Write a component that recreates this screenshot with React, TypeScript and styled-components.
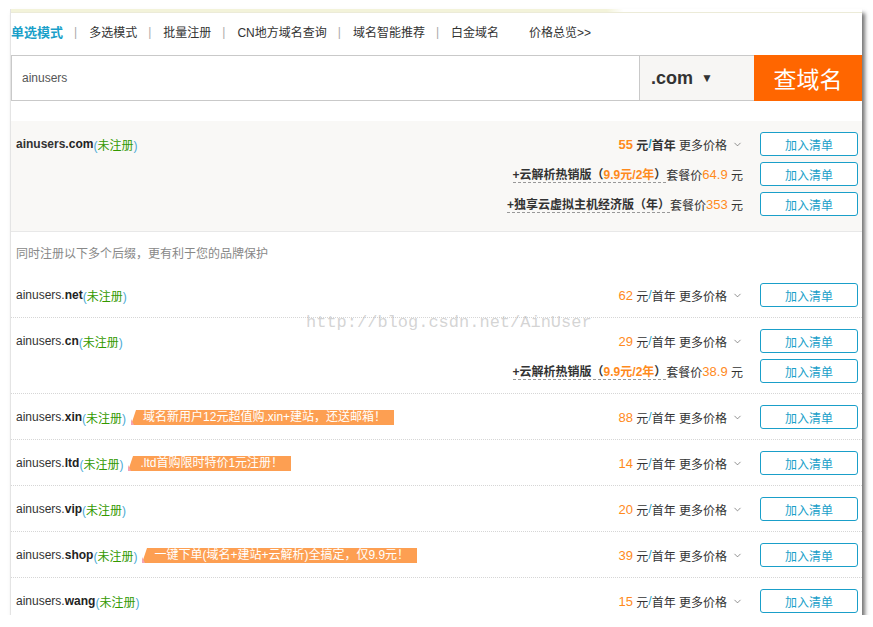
import styled, { createGlobalStyle } from "styled-components";
import { ChevronDown } from "lucide-react";

const GlobalStyle = createGlobalStyle`
  html, body {
    margin: 0;
    padding: 0;
    background: #fff;
  }
  body {
    font-family: "Liberation Sans", "Noto Sans CJK SC", sans-serif;
    color: #333;
  }
`;

type Extra = { label: string; hot?: string; close?: string; pkg: string };

type Domain = {
  suffix: string;
  price: string;
  tag?: string;
  extras?: Extra[];
};

const featured: Domain = {
  suffix: "com",
  price: "55",
  extras: [
    { label: "+云解析热销版（", hot: "9.9元/2年", close: "）", pkg: "64.9" },
    { label: "+独享云虚拟主机经济版（年）", pkg: "353" },
  ],
};

const domains: Domain[] = [
  { suffix: "net", price: "62" },
  {
    suffix: "cn",
    price: "29",
    extras: [{ label: "+云解析热销版（", hot: "9.9元/2年", close: "）", pkg: "38.9" }],
  },
  { suffix: "xin", price: "88", tag: "域名新用户12元超值购.xin+建站，还送邮箱！" },
  { suffix: "ltd", price: "14", tag: ".ltd首购限时特价1元注册！" },
  { suffix: "vip", price: "20" },
  { suffix: "shop", price: "39", tag: "一键下单(域名+建站+云解析)全搞定，仅9.9元！" },
  { suffix: "wang", price: "15" },
];

const navItems = ["单选模式", "多选模式", "批量注册", "CN地方域名查询", "域名智能推荐", "白金域名"];

const DomainRow = ({ d, featured }: { d: Domain; featured?: boolean }) => (
  <Row $featured={featured}>
    <NameCell>
      <Name $bold={featured}>
        ainusers.<b>{d.suffix}</b>
      </Name>
      <Status>
        <Paren>(</Paren>未注册<Paren>)</Paren>
      </Status>
      {d.tag && <Tag>{d.tag}</Tag>}
    </NameCell>
    <Offers>
      <OfferLine>
        <PriceText $bold={featured}>
          <Num>{d.price}</Num> 元<Slash>/</Slash>首年 <More>更多价格</More>
          <ChevronDown size={11} strokeWidth={1.4} color="#555" />
        </PriceText>
        <AddButton>加入清单</AddButton>
      </OfferLine>
      {d.extras?.map((e) => (
        <OfferLine key={e.label}>
          <PriceText>
            <Bundle>
              {e.label}
              {e.hot && <Hot>{e.hot}</Hot>}
              {e.close}
            </Bundle>{" "}
            套餐价<Pkg>{e.pkg}</Pkg> 元
          </PriceText>
          <AddButton>加入清单</AddButton>
        </OfferLine>
      ))}
    </Offers>
  </Row>
);

const App = () => {
  return (
    <>
      <GlobalStyle />
      <Frame>
        <TopStrip />
        <NavBar>
          {navItems.map((n, i) => (
            <NavItem key={n} $active={i === 0}>
              {i > 0 && <Sep>|</Sep>}
              {n}
            </NavItem>
          ))}
          <Overview>价格总览&gt;&gt;</Overview>
        </NavBar>
        <SearchBar>
          <SearchInput>ainusers</SearchInput>
          <SuffixSelect>
            .com <Caret>▼</Caret>
          </SuffixSelect>
          <SearchBtn>查域名</SearchBtn>
        </SearchBar>
        <FeaturedBlock>
          <DomainRow d={featured} featured />
        </FeaturedBlock>
        <Hint>同时注册以下多个后缀，更有利于您的品牌保护</Hint>
        <List>
          {domains.map((d) => (
            <DomainRow key={d.suffix} d={d} />
          ))}
        </List>
        <Watermark>http://blog.csdn.net/AinUser</Watermark>
      </Frame>
    </>
  );
};

const Frame = styled.div`
  position: relative;
  margin: 9px 0 0 10px;
  width: 852px;
  height: 606px;
  overflow: hidden;
  background: #fff;
  border-left: 1px solid #e4e4e4;
  box-sizing: border-box;
  box-shadow: 3px 4px 4px rgba(0, 0, 0, 0.55);
`;

const TopStrip = styled.div`
  height: 3px;
  background: linear-gradient(90deg, #f3f3da 0%, #f3f3da 70%, #fff 72%, #fff 100%);
  border-bottom: 1px solid #ecebd8;
`;

const NavBar = styled.div`
  display: flex;
  align-items: center;
  height: 37px;
  font-size: 12px;
`;

const NavItem = styled.span<{ $active?: boolean }>`
  display: flex;
  align-items: center;
  color: ${(p) => (p.$active ? "#1a9fc9" : "#333")};
  font-weight: ${(p) => (p.$active ? "bold" : "normal")};
  font-size: ${(p) => (p.$active ? "13px" : "12px")};
`;

const Sep = styled.span`
  color: #aaa;
  font-weight: normal;
  margin: 0 12px 0 11px;
  font-size: 12px;
`;

const Overview = styled.span`
  margin-left: 30px;
  color: #333;
`;

const SearchBar = styled.div`
  display: flex;
  height: 46px;
  margin-top: 5px;
`;

const SearchInput = styled.div`
  flex: 1;
  display: flex;
  align-items: center;
  padding-left: 10px;
  border: 1px solid #c9c9c9;
  border-right: none;
  font-size: 12px;
  color: #555;
`;

const SuffixSelect = styled.div`
  width: 115px;
  display: flex;
  align-items: center;
  gap: 8px;
  padding-left: 11px;
  box-sizing: border-box;
  background: #f7f6f4;
  border: 1px solid #c9c9c9;
  border-right: none;
  font-size: 18px;
  font-weight: bold;
  color: #333;
`;

const Caret = styled.span`
  font-size: 12px;
`;

const SearchBtn = styled.div`
  width: 108px;
  display: flex;
  align-items: center;
  justify-content: center;
  background: #ff6600;
  color: #fff;
  font-size: 23px;
  font-family: "Noto Sans CJK SC", sans-serif;
`;

const FeaturedBlock = styled.div`
  margin-top: 20px;
  background: #f9f8f6;
  border-bottom: 1px solid #e8e8e8;
  padding-bottom: 5px;
`;

const Hint = styled.div`
  height: 40px;
  display: flex;
  align-items: center;
  padding-left: 5px;
  font-size: 12px;
  color: #888;
`;

const List = styled.div`
  display: flex;
  flex-direction: column;
`;

const Row = styled.div<{ $featured?: boolean }>`
  display: flex;
  align-items: flex-start;
  padding: 11px 4px 10px 5px;
  border-bottom: ${(p) => (p.$featured ? "none" : "1px dotted #d6d6d6")};
`;

const NameCell = styled.div`
  flex: 1;
  display: flex;
  align-items: center;
  height: 24px;
  font-size: 12px;
`;

const Name = styled.span<{ $bold?: boolean }>`
  color: #333;
  font-weight: ${(p) => (p.$bold ? "bold" : "normal")};
  b {
    font-weight: bold;
    color: #222;
  }
`;

const Status = styled.span`
  color: #339900;
`;

const Paren = styled.span`
  color: #4aaad6;
`;

const Tag = styled.span`
  position: relative;
  margin-left: 5px;
  height: 15px;
  line-height: 15px;
  padding: 0 8px 0 12px;
  background: #fd9f52;
  color: #fff;
  font-size: 12px;
  &::before {
    content: "";
    position: absolute;
    left: 0;
    top: 0;
    border-top: 15px solid #fff;
    border-right: 5px solid transparent;
  }
  &::after {
    content: "";
    position: absolute;
    left: 0;
    bottom: 0;
    border-bottom: 6px solid #f6a3b4;
    border-right: 3px solid transparent;
  }
`;

const Offers = styled.div`
  display: flex;
  flex-direction: column;
  gap: 6px;
`;

const OfferLine = styled.div`
  display: flex;
  align-items: center;
  justify-content: flex-end;
  gap: 17px;
`;

const PriceText = styled.span<{ $bold?: boolean }>`
  display: flex;
  align-items: center;
  white-space: pre;
  font-size: 12px;
  color: #333;
  font-weight: ${(p) => (p.$bold ? "bold" : "normal")};
  svg {
    margin-left: 5px;
  }
`;

const Num = styled.span`
  color: #ff8a1c;
  font-size: 13px;
`;

const Slash = styled.span`
  color: #1a9fc9;
`;

const More = styled.span`
  font-weight: normal;
`;

const Bundle = styled.span`
  font-weight: bold;
  border-bottom: 1px dashed #999;
`;

const Hot = styled.span`
  color: #ff8a1c;
`;

const Pkg = styled.span`
  color: #ff8a1c;
  font-size: 13px;
`;

const AddButton = styled.button`
  width: 98px;
  height: 24px;
  box-sizing: border-box;
  border: 1px solid #1a9fc9;
  border-radius: 3px;
  background: #fff;
  color: #1a9fc9;
  font-family: "Noto Sans CJK SC", sans-serif;
  font-size: 12px;
  padding: 0;
  cursor: pointer;
`;

const Watermark = styled.div`
  position: absolute;
  left: 295px;
  top: 304px;
  font-family: "Liberation Mono", monospace;
  font-size: 17px;
  color: rgba(170, 170, 170, 0.5);
  pointer-events: none;
`;

export default App;
